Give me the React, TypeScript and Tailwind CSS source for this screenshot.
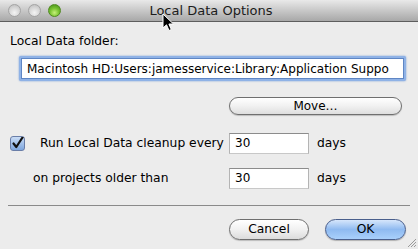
import React from "react";

const font = { fontFamily: '"DejaVu Sans", "Noto Sans", sans-serif' };

function Light({ green }: { green?: boolean }) {
  return (
    <div
      className={
        "w-[13px] h-[13px] rounded-full border " +
        (green
          ? "border-[#4f8a1f] bg-[radial-gradient(circle_at_50%_70%,#c6f07a_0%,#7cc534_45%,#3f8a16_100%)]"
          : "border-[#a4a4a4] bg-[radial-gradient(circle_at_50%_70%,#f4f4f4_0%,#d8d8d8_50%,#b9b9b9_100%)]")
      }
    />
  );
}

function Field({ value, className }: { value: string; className?: string }) {
  return (
    <div
      className={
        "bg-white border border-t-[#8c8c8c] border-x-[#b4b4b4] border-b-[#c8c8c8] text-[12px] text-black leading-none flex items-center pl-[5px] overflow-hidden whitespace-nowrap " +
        (className ?? "")
      }
    >
      {value}
    </div>
  );
}

export default function App() {
  return (
    <div
      className="relative w-[418px] h-[249px] bg-[#ececec] overflow-hidden text-black"
      style={font}
    >
      {/* title bar */}
      <div className="relative h-[22px] border-b border-[#5e5e5e] bg-gradient-to-b from-[#e9e9e9] to-[#a8a8a8] flex items-center">
        <div className="flex items-center gap-[7px] pl-[8px]">
          <Light />
          <Light />
          <Light green />
        </div>
        <div className="absolute inset-0 flex items-center justify-center text-[13px] text-[#1c1c1c] pl-[4px]">
          Local Data Options
        </div>
      </div>

      {/* content */}
      <div className="flex flex-col">
        <div className="pl-[10px] mt-[12px] text-[12.3px] leading-[15px]">Local Data folder:</div>

        <div className="ml-[19px] mt-[7px] w-[387px] h-[25px] rounded-[2px] bg-[#8fb2e6] p-[2px] shadow-[0_0_2px_#6e97d6]">
          <Field
            value="Macintosh HD:Users:jamesservice:Library:Application Suppo"
            className="h-full w-full !border-[#5f86c4]"
          />
        </div>

        <div className="flex justify-end pr-[16px] mt-[16px]">
          <button className="w-[173px] h-[18px] rounded-full border border-[#6f6f6f] bg-gradient-to-b from-[#ffffff] via-[#f1f1f1] to-[#dedede] text-[12px] leading-none shadow-[0_1px_1px_rgba(0,0,0,0.2)]">
            Move…
          </button>
        </div>

        <div className="flex items-center mt-[17px] h-[22px]">
          <div className="ml-[10px] w-[15px] h-[15px] rounded-[3px] border border-[#6a7ea8] bg-gradient-to-b from-[#c9dcf5] to-[#7ea6de] flex items-center justify-center">
            <svg width="13" height="13" viewBox="0 0 13 13">
              <path d="M2.5 6.5 L5.3 10 L11.5 0.5" fill="none" stroke="#111" strokeWidth="2.2" strokeLinecap="round" strokeLinejoin="round" />
            </svg>
          </div>
          <div className="ml-[15px] text-[12.3px] w-[189px] whitespace-nowrap">Run Local Data cleanup every</div>
          <Field value="30" className="w-[80px] h-[21px]" />
          <div className="ml-[8px] text-[12.3px]">days</div>
        </div>

        <div className="flex items-center mt-[13px] h-[22px]">
          <div className="ml-[33px] text-[12.3px] w-[196px] whitespace-nowrap">on projects older than</div>
          <Field value="30" className="w-[80px] h-[21px]" />
          <div className="ml-[8px] text-[12.3px]">days</div>
        </div>

        <div className="mx-[8px] mt-[16px] h-px bg-[#8a8a8a]" />

        <div className="flex justify-end gap-[16px] pr-[12px] mt-[13px]">
          <button className="w-[80px] h-[21px] rounded-full border border-[#6f6f6f] bg-gradient-to-b from-[#ffffff] via-[#f1f1f1] to-[#dcdcdc] text-[12.3px] leading-none shadow-[0_1px_1px_rgba(0,0,0,0.2)]">
            Cancel
          </button>
          <button className="w-[81px] h-[21px] rounded-full border border-[#4a5f8c] bg-gradient-to-b from-[#d6e6fb] via-[#8fbaf0] to-[#a9d0fb] text-[12.3px] leading-none shadow-[0_1px_1px_rgba(0,0,0,0.25)]">
            OK
          </button>
        </div>
      </div>

      {/* resize grip */}
      <svg className="absolute right-[1px] bottom-[1px]" width="11" height="11" viewBox="0 0 11 11">
        <path d="M10 2 L2 10 M10 5 L5 10 M10 8 L8 10" stroke="#9a9a9a" strokeWidth="1" />
      </svg>

      {/* mouse cursor */}
      <svg className="absolute left-[162px] top-[13px]" width="13" height="20" viewBox="0 0 13 20">
        <path
          d="M1 1 L1 15 L4.5 11.8 L7 17.5 L9.3 16.5 L6.9 11 L11.5 11 Z"
          fill="#000"
          stroke="#fff"
          strokeWidth="1"
          strokeLinejoin="round"
        />
      </svg>
    </div>
  );
}
